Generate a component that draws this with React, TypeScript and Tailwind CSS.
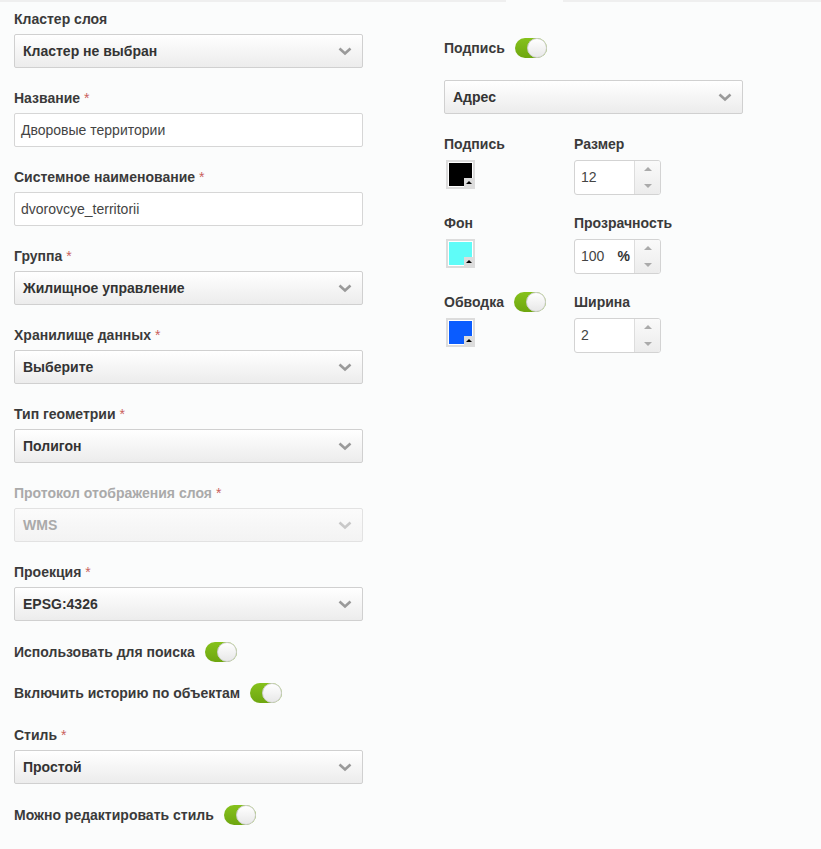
import React from "react";

const font = { fontFamily: '"Liberation Sans", Arial, sans-serif' };

function Chevron({ color = "#9a9a9a" }: { color?: string }) {
  return (
    <svg width="14" height="9" viewBox="0 0 14 9">
      <path d="M1.5 1.5 L7 6.5 L12.5 1.5" fill="none" stroke={color} strokeWidth="2.6" />
    </svg>
  );
}

function Label({ text, req, disabled }: { text: string; req?: boolean; disabled?: boolean }) {
  return (
    <div className={`h-[18px] leading-[18px] text-[14px] font-bold mb-[6px] ${disabled ? "text-[#aaaaaa]" : "text-[#3a3a3a]"}`}>
      {text}
      {req && <span className="text-[#c9615c] font-normal ml-[4px]">*</span>}
    </div>
  );
}

function Select({ value, disabled, w = "w-[349px]" }: { value: string; disabled?: boolean; w?: string }) {
  return (
    <div
      className={`${w} h-[34px] flex items-center justify-between pl-[8px] pr-[10px] border rounded-[2px] ${
        disabled
          ? "border-[#e2e2e2] bg-gradient-to-b from-[#fbfbfb] to-[#f3f3f3] text-[#aaaaaa]"
          : "border-[#d0d0d0] bg-gradient-to-b from-white to-[#ececec] text-[#333333]"
      }`}
    >
      <span className="text-[14px] font-bold">{value}</span>
      <Chevron color={disabled ? "#c8c8c8" : "#9a9a9a"} />
    </div>
  );
}

function Input({ value }: { value: string }) {
  return (
    <div className="w-[349px] h-[34px] flex items-center pl-[6px] border border-[#d6d6d6] rounded-[2px] bg-white text-[14px] text-[#444444]">
      {value}
    </div>
  );
}

function Toggle() {
  return (
    <div className="relative w-[32px] h-[20px] rounded-full bg-gradient-to-b from-[#86c21c] to-[#6ea610]">
      <div className="absolute right-0 top-0 w-[20px] h-[20px] rounded-full bg-gradient-to-b from-white to-[#e8e8e8] border border-[#cfcfcf]" />
    </div>
  );
}

function ToggleRow({ text }: { text: string }) {
  return (
    <div className="flex items-center gap-[10px] h-[20px] text-[14px] font-bold text-[#3a3a3a]">
      <span>{text}</span>
      <Toggle />
    </div>
  );
}

function Swatch({ color }: { color: string }) {
  return (
    <div className="relative w-[29px] h-[29px] bg-[#dcdcdc] p-[2px] ml-[2px]">
      <div className="w-full h-full border border-white" style={{ background: color }} />
      <div className="absolute right-[2px] bottom-[2px] w-[9px] h-[9px] bg-[#dcdcdc] flex items-center justify-center">
        <div className="w-0 h-0 border-l-[3px] border-r-[3px] border-b-[3px] border-l-transparent border-r-transparent border-b-black" />
      </div>
    </div>
  );
}

function Spinner({ value, suffix }: { value: string; suffix?: string }) {
  return (
    <div className="flex w-[87px] h-[35px] border border-[#d3d3d3] rounded-[3px] overflow-hidden bg-white">
      <div className="flex-1 flex items-center justify-between pl-[6px] pr-[4px] text-[14px] text-[#444444]">
        <span>{value}</span>
        {suffix && <span className="font-bold text-[14px] text-[#333333]">{suffix}</span>}
      </div>
      <div className="w-[26px] border-l border-[#dddddd] flex flex-col bg-gradient-to-b from-[#fafafa] to-[#ececec]">
        <div className="flex-1 flex items-center justify-center">
          <div className="w-0 h-0 border-l-[4px] border-r-[4px] border-b-[4px] border-l-transparent border-r-transparent border-b-[#aaaaaa]" />
        </div>
        <div className="flex-1 flex items-center justify-center">
          <div className="w-0 h-0 border-l-[4px] border-r-[4px] border-t-[4px] border-l-transparent border-r-transparent border-t-[#aaaaaa]" />
        </div>
      </div>
    </div>
  );
}

function SmallLabel({ children }: { children: React.ReactNode }) {
  return <div className="h-[18px] leading-[18px] text-[14px] font-bold text-[#3a3a3a] mb-[7px] flex items-center gap-[10px]">{children}</div>;
}

export default function App() {
  const fields: { label: string; req?: boolean; value: string; kind: "select" | "input"; disabled?: boolean }[] = [
    { label: "Кластер слоя", value: "Кластер не выбран", kind: "select" },
    { label: "Название", req: true, value: "Дворовые территории", kind: "input" },
    { label: "Системное наименование", req: true, value: "dvorovcye_territorii", kind: "input" },
    { label: "Группа", req: true, value: "Жилищное управление", kind: "select" },
    { label: "Хранилище данных", req: true, value: "Выберите", kind: "select" },
    { label: "Тип геометрии", req: true, value: "Полигон", kind: "select" },
    { label: "Протокол отображения слоя", req: true, value: "WMS", kind: "select", disabled: true },
    { label: "Проекция", req: true, value: "EPSG:4326", kind: "select" },
  ];

  return (
    <div className="w-[821px] h-[849px] bg-[#fbfcfc] relative" style={font}>
      {/* top tab edge */}
      <div className="flex h-[2px]">
        <div className="w-[506px] bg-[#efefef]" />
        <div className="w-[57px]" />
        <div className="flex-1 bg-[#efefef]" />
      </div>

      <div className="flex pt-[8px]">
        {/* left column */}
        <div className="ml-[14px] w-[349px] flex flex-col">
          {fields.map((f) => (
            <div key={f.label} className="mb-[21px]">
              <Label text={f.label} req={f.req} disabled={f.disabled} />
              {f.kind === "select" ? <Select value={f.value} disabled={f.disabled} /> : <Input value={f.value} />}
            </div>
          ))}
          <div className="flex flex-col gap-[21px]">
            <ToggleRow text="Использовать для поиска" />
            <ToggleRow text="Включить историю по объектам" />
          </div>
          <div className="mt-[23px] mb-[21px]">
            <Label text="Стиль" req />
            <Select value="Простой" />
          </div>
          <ToggleRow text="Можно редактировать стиль" />
        </div>

        {/* right column */}
        <div className="ml-[81px] w-[299px] flex flex-col pt-[28px]">
          <ToggleRow text="Подпись" />
          <div className="mt-[22px]">
            <Select value="Адрес" w="w-[299px]" />
          </div>
          <div className="grid grid-cols-[130px_1fr] mt-[21px] gap-y-[19px]">
            <div>
              <SmallLabel>Подпись</SmallLabel>
              <Swatch color="#000000" />
            </div>
            <div>
              <SmallLabel>Размер</SmallLabel>
              <Spinner value="12" />
            </div>
            <div>
              <SmallLabel>Фон</SmallLabel>
              <Swatch color="#5ffcf8" />
            </div>
            <div>
              <SmallLabel>Прозрачность</SmallLabel>
              <Spinner value="100" suffix="%" />
            </div>
            <div>
              <SmallLabel>
                Обводка <Toggle />
              </SmallLabel>
              <Swatch color="#0a5cff" />
            </div>
            <div>
              <SmallLabel>Ширина</SmallLabel>
              <Spinner value="2" />
            </div>
          </div>
        </div>
      </div>
    </div>
  );
}
